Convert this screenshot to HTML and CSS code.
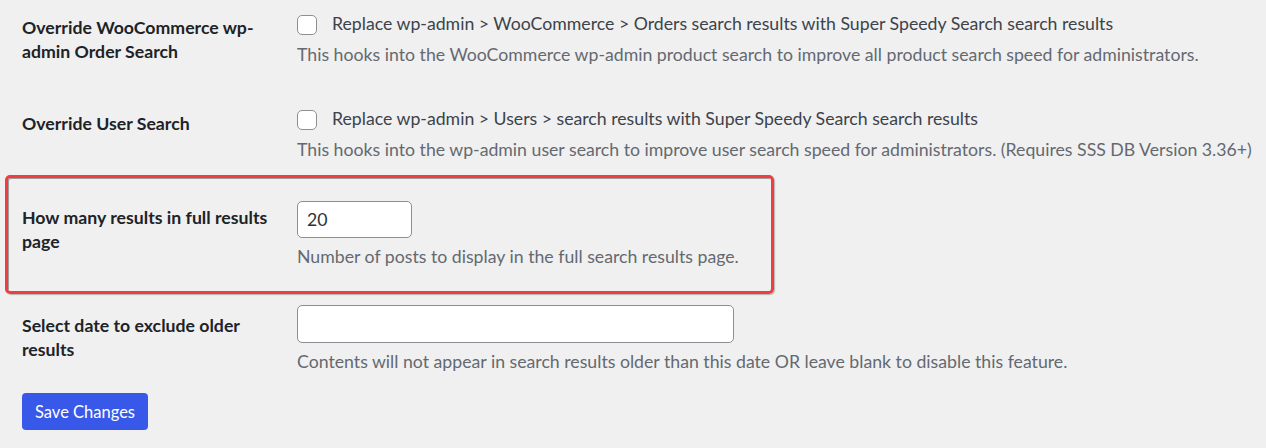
FILE: index.html
```html
<!DOCTYPE html>
<html lang="en">
<head>
  <meta charset="UTF-8" />
  <meta name="viewport" content="width=device-width, initial-scale=1.0" />
  <title>Super Speedy Search Settings</title>
  <link rel="stylesheet" href="styles.css">
</head>
<body>

<form class="settings">

  <div class="row row-first">
    <div class="row-label">Override WooCommerce wp-admin Order Search</div>
    <div class="row-field">
      <label class="option">
        <input type="checkbox" class="check" />
        <span>Replace wp-admin &gt; WooCommerce &gt; Orders search results with Super Speedy Search search results</span>
      </label>
      <p class="description">This hooks into the WooCommerce wp-admin product search to improve all product search speed for administrators.</p>
    </div>
  </div>

  <div class="row row-second">
    <div class="row-label">Override User Search</div>
    <div class="row-field">
      <label class="option">
        <input type="checkbox" class="check" />
        <span>Replace wp-admin &gt; Users &gt; search results with Super Speedy Search search results</span>
      </label>
      <p class="description">This hooks into the wp-admin user search to improve user search speed for administrators. (Requires SSS DB Version 3.36+)</p>
    </div>
  </div>

  <div class="highlight">
    <div class="row row-boxed">
      <div class="row-label">How many results in full results page</div>
      <div class="row-field">
        <input type="text" class="text-input small" value="20" />
        <p class="description">Number of posts to display in the full search results page.</p>
      </div>
    </div>
  </div>

  <div class="row row-date">
    <div class="row-label">Select date to exclude older results</div>
    <div class="row-field">
      <input type="text" class="text-input wide" value="" />
      <p class="description">Contents will not appear in search results older than this date OR leave blank to disable this feature.</p>
    </div>
  </div>

  <button type="button" class="save-btn">Save Changes</button>

</form>

</body>
</html>
```

FILE: styles.css
```css
body {
  font-family: Lato, "Liberation Sans", sans-serif;
  font-size: 17.7px;
  background-color: #f0f0f1;
  color: #3c434a;
  margin: 0;
}

.settings {
  padding: 0 0 0 22px;
}

.row {
  display: flex;
}

.row-label {
  width: 262px;
  padding-right: 13px;
  color: #1d2327;
  font-weight: 700;
  line-height: 24px;
}

.row-field {
  flex: 1;
}

.option {
  display: flex;
  align-items: center;
  height: 24px;
  line-height: 24px;
}

.check {
  appearance: none;
  -webkit-appearance: none;
  width: 20px;
  height: 20px;
  margin: 2px 15px 0 0;
  border: 1px solid #8c8f94;
  border-radius: 5px;
  background: #fff;
}

.description {
  margin: 7px 0 0;
  color: #646970;
  line-height: 24px;
}

.text-input {
  display: block;
  box-sizing: border-box;
  height: 37px;
  margin: 0;
  padding: 0 9px;
  border: 1px solid #8c8f94;
  border-radius: 5px;
  background: #fff;
  color: #2c3338;
  font-family: inherit;
  font-size: 17.7px;
}

.text-input.small {
  width: 115px;
}

.text-input.wide {
  width: 437px;
  height: 38px;
}

/* row spacing */
.row-first {
  padding: 12px 0 28px;
}

.row-first .row-label {
  padding-top: 4px;
}

.row-second {
  padding: 12px 0 13px;
}

.row-second .row-label {
  padding-top: 5px;
}

/* red outline drawn round the results-per-page setting */
.highlight {
  width: 749px;
  margin-left: -17px;
  border: 3px solid #ef3d42;
  border-radius: 5px;
  box-shadow: inset 1px 1px 0 rgba(0, 0, 0, 0.35), 1px 1px 1px rgba(0, 0, 0, 0.25);
  padding: 23px 0 22px 14px;
}

.row-boxed .row-label {
  padding-top: 5px;
}

.row-date {
  padding: 11px 0 0;
}

.row-date .row-label {
  padding-top: 9px;
}

.save-btn {
  margin-top: 19px;
  width: 126px;
  height: 37px;
  padding: 0;
  border: none;
  border-radius: 4px;
  background-color: #3858e9;
  color: #fff;
  font-family: inherit;
  font-size: 16.5px;
  cursor: pointer;
}
```
